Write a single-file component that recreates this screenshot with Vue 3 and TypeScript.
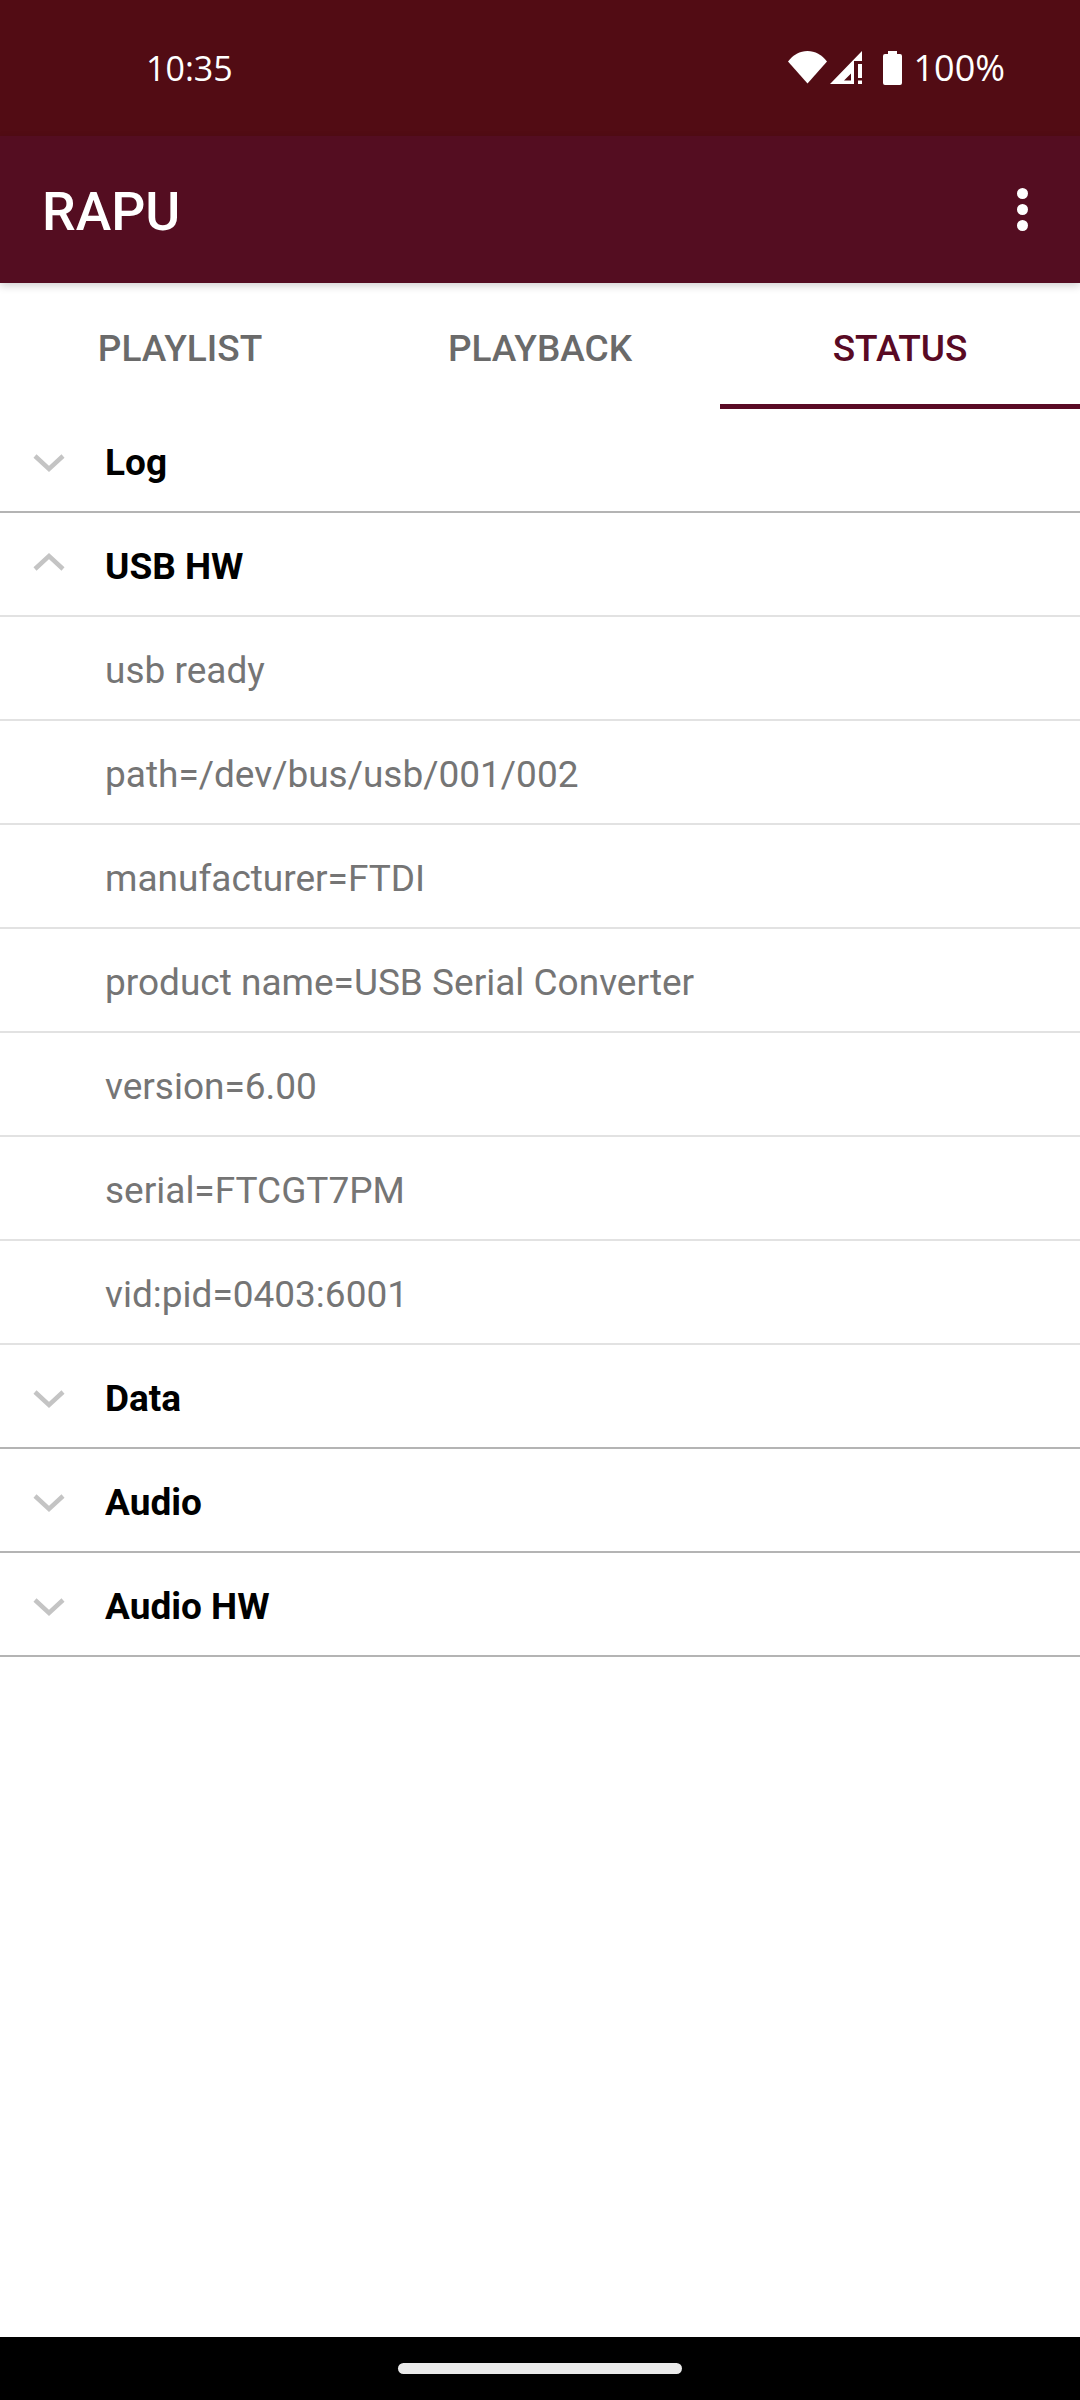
<script setup lang="ts">
interface Row { label: string; kind: 'head' | 'item'; open?: boolean; last?: boolean }
const tabs = ['PLAYLIST', 'PLAYBACK', 'STATUS']
const rows: Row[] = [
  { label: 'Log', kind: 'head' },
  { label: 'USB HW', kind: 'head', open: true },
  { label: 'usb ready', kind: 'item' },
  { label: 'path=/dev/bus/usb/001/002', kind: 'item' },
  { label: 'manufacturer=FTDI', kind: 'item' },
  { label: 'product name=USB Serial Converter', kind: 'item' },
  { label: 'version=6.00', kind: 'item' },
  { label: 'serial=FTCGT7PM', kind: 'item' },
  { label: 'vid:pid=0403:6001', kind: 'item' },
  { label: 'Data', kind: 'head' },
  { label: 'Audio', kind: 'head' },
  { label: 'Audio HW', kind: 'head' },
]
</script>

<template>
  <div class="screen">
    <header class="status">
      <span class="time">10:35</span>
      <div class="sys">
        <svg class="wifi" width="39" height="33" viewBox="0 0 39 33"><path d="M0 10.500C5 4 12 0 19.500 0S34 4 39 10.500L19.500 32.500z" fill="#fff" /></svg>
        <svg class="cell" width="33" height="33" viewBox="0 0 33 33">
          <path fill-rule="evenodd" d="M0 33 32 0V10H24V33ZM14 29.500H21V22.500Z" fill="#fff" />
          <path d="M28 13h4v14h-4zM28 29.500h4V33h-4z" fill="#fff" />
        </svg>
        <svg class="batt" width="19" height="34" viewBox="0 0 19 34"><path d="M5 0h9v3h3a2 2 0 0 1 2 2v27a2 2 0 0 1-2 2H2a2 2 0 0 1-2-2V5a2 2 0 0 1 2-2h3z" fill="#fff" /></svg>
        <span class="pct">100%</span>
      </div>
    </header>
    <div class="appbar">
      <span class="title">RAPU</span>
      <div class="more"><i /><i /><i /></div>
    </div>
    <nav class="tabs">
      <div v-for="(t, i) in tabs" :key="t" class="tab" :class="{ active: i === 2 }">{{ t }}</div>
    </nav>
    <main class="list">
      <div v-for="r in rows" :key="r.label" class="row" :class="[r.kind, { open: r.open }]">
        <svg v-if="r.kind === 'head'" class="chev" width="34" height="20" viewBox="0 0 34 20">
          <path :d="r.open ? 'M3 17 17 4l14 13' : 'M3 3l14 13L31 3'" fill="none" stroke="#c4c4c4" stroke-width="4.500" />
        </svg>
        <span class="label">{{ r.label }}</span>
      </div>
    </main>
    <footer class="navbar"><div class="pill" /></footer>
  </div>
</template>

<style>
html, body { margin: 0; background: #fff; }
</style>

<style scoped>
.screen {
  width: 1080px;
  height: 2400px;
  display: flex;
  flex-direction: column;
  background: #fff;
  font-family: Roboto, sans-serif;
  overflow: hidden;
}
.status {
  height: 136px;
  flex: none;
  background: #520c14;
  color: #fff;
  display: flex;
  justify-content: space-between;
  align-items: flex-start;
  padding: 48px 75px 0 146px;
  box-sizing: border-box;
}
.time, .pct {
  font-family: "Open Sans", Roboto, sans-serif;
  font-size: 34px;
  font-weight: 500;
  line-height: 40px;
}
.pct { font-size: 36px; }
.sys { display: flex; align-items: flex-start; }
.wifi { margin-top: 3px; margin-right: 3px; }
.cell { margin-top: 3px; margin-right: 20px; }
.batt { margin-top: 3px; margin-right: 11px; }
.appbar {
  height: 147px;
  flex: none;
  background: #540d21;
  color: #fff;
  display: flex;
  align-items: center;
  justify-content: space-between;
  padding: 4px 34px 0 42px;
  box-sizing: border-box;
  position: relative;
  z-index: 1;
  box-shadow: 0 3px 8px rgba(0, 0, 0, 0.18);
}
.title { font-size: 53.500px; font-weight: 500; }
.more { width: 48px; display: flex; flex-direction: column; align-items: center; gap: 5px; margin-top: -4px; }
.more i { width: 11px; height: 11px; border-radius: 50%; background: #fff; display: block; }
.tabs { height: 126px; flex: none; display: flex; }
.tab {
  flex: 1;
  display: flex;
  align-items: center;
  justify-content: center;
  font-size: 37px;
  font-weight: 500;
  color: #6a6a6a;
  box-sizing: border-box;
  padding-top: 9px;
  border-bottom: 5px solid transparent;
}
.tab.active { color: #590a24; border-bottom-color: #590a24; }
.row {
  height: 104px;
  box-sizing: border-box;
  display: flex;
  align-items: center;
  padding: 4px 0 0 105px;
  position: relative;
  font-size: 37px;
  border-bottom: 2px solid #e2e2e2;
}
.row.head { border-bottom-color: #b4b4b4; }
.row.head.open { border-bottom-color: #e2e2e2; }
.row.head .label { font-weight: 700; color: #000; }
.row.item .label { color: #757575; }
.chev { position: absolute; left: 32px; top: 44px; }
.row.open .chev { top: 39px; }
.list { flex: 1; }
.navbar {
  height: 63px;
  flex: none;
  background: #000;
  display: flex;
  justify-content: center;
  padding-top: 26px;
  box-sizing: border-box;
}
.pill { width: 284px; height: 11px; border-radius: 6px; background: #eaeaea; }
</style>
